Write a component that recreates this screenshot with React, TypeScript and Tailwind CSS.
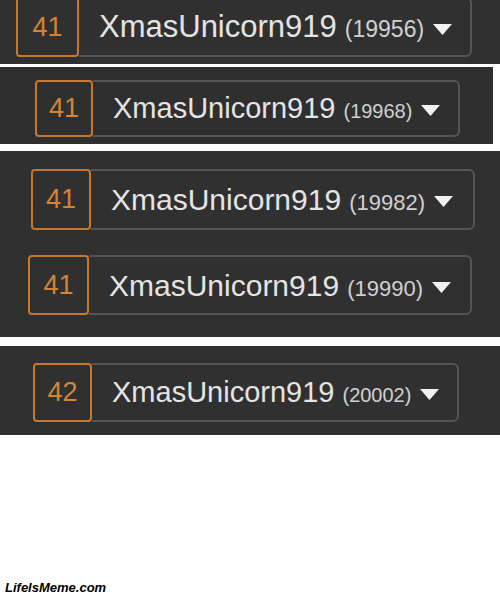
type RowProps = {
  rank: number;
  score: number;
  className: string;
  badge: string;
  main: string;
  small: string;
};

function Row({ rank, score, className, badge, main, small }: RowProps) {
  return (
    <div className={`flex ${className}`}>
      <div
        className={`flex shrink-0 items-center justify-center rounded-[4px] border-2 border-[#c8782c] text-[27px] text-[#d58434] ${badge}`}
      >
        {rank}
      </div>
      <div className="flex flex-1 items-center rounded-r-md border-y-2 border-r-2 border-[#555555] pl-5">
        <div className="flex items-baseline">
          <span className={`text-[#e4e4e4] ${main}`}>XmasUnicorn919</span>
          <span className={`ml-[8px] text-[#d0d0d0] ${small}`}>({score})</span>
        </div>
        <svg width="19" height="11" viewBox="0 0 19 11" className="ml-[9px] mt-1">
          <path d="M0 0 H19 L9.5 11 Z" fill="#f2f2f2" />
        </svg>
      </div>
    </div>
  );
}

export default function App() {
  return (
    <div className="relative h-[600px] w-[500px] overflow-hidden bg-white font-['Liberation_Sans',Arial,sans-serif]">
      {/* panel 1 - top cut off */}
      <div className="h-[64px] overflow-hidden bg-[#303030] pl-[16px]">
        <Row
          rank={41}
          score={19956}
          className="-mt-[3px] h-[60px] w-[456px]"
          badge="w-[63px]"
          main="text-[31px]"
          small="text-[23px]"
        />
      </div>

      <div className="mt-[3px] h-[77px] w-[493px] bg-[#2f2f2f] pl-[35px] pt-[13px]">
        <Row
          rank={41}
          score={19968}
          className="h-[57px] w-[425px]"
          badge="w-[58px]"
          main="text-[29px]"
          small="text-[20px]"
        />
      </div>

      <div className="mt-[7px] flex h-[186px] flex-col bg-[#303030] pt-[18px]">
        <Row
          rank={41}
          score={19982}
          className="ml-[31px] h-[61px] w-[444px]"
          badge="w-[60px]"
          main="text-[30px]"
          small="text-[22px]"
        />
        <Row
          rank={41}
          score={19990}
          className="ml-[28px] mt-[25px] h-[60px] w-[444px]"
          badge="w-[61px]"
          main="text-[30px]"
          small="text-[22px]"
        />
      </div>

      <div className="mt-[9px] h-[89px] bg-[#303030] pl-[33px] pt-[17px]">
        <Row
          rank={42}
          score={20002}
          className="h-[59px] w-[426px]"
          badge="w-[59px]"
          main="text-[29px]"
          small="text-[20px]"
        />
      </div>

      <div className="absolute bottom-[3px] left-[5px] text-[13px] font-bold italic text-black">
        LifeIsMeme.com
      </div>
    </div>
  );
}
